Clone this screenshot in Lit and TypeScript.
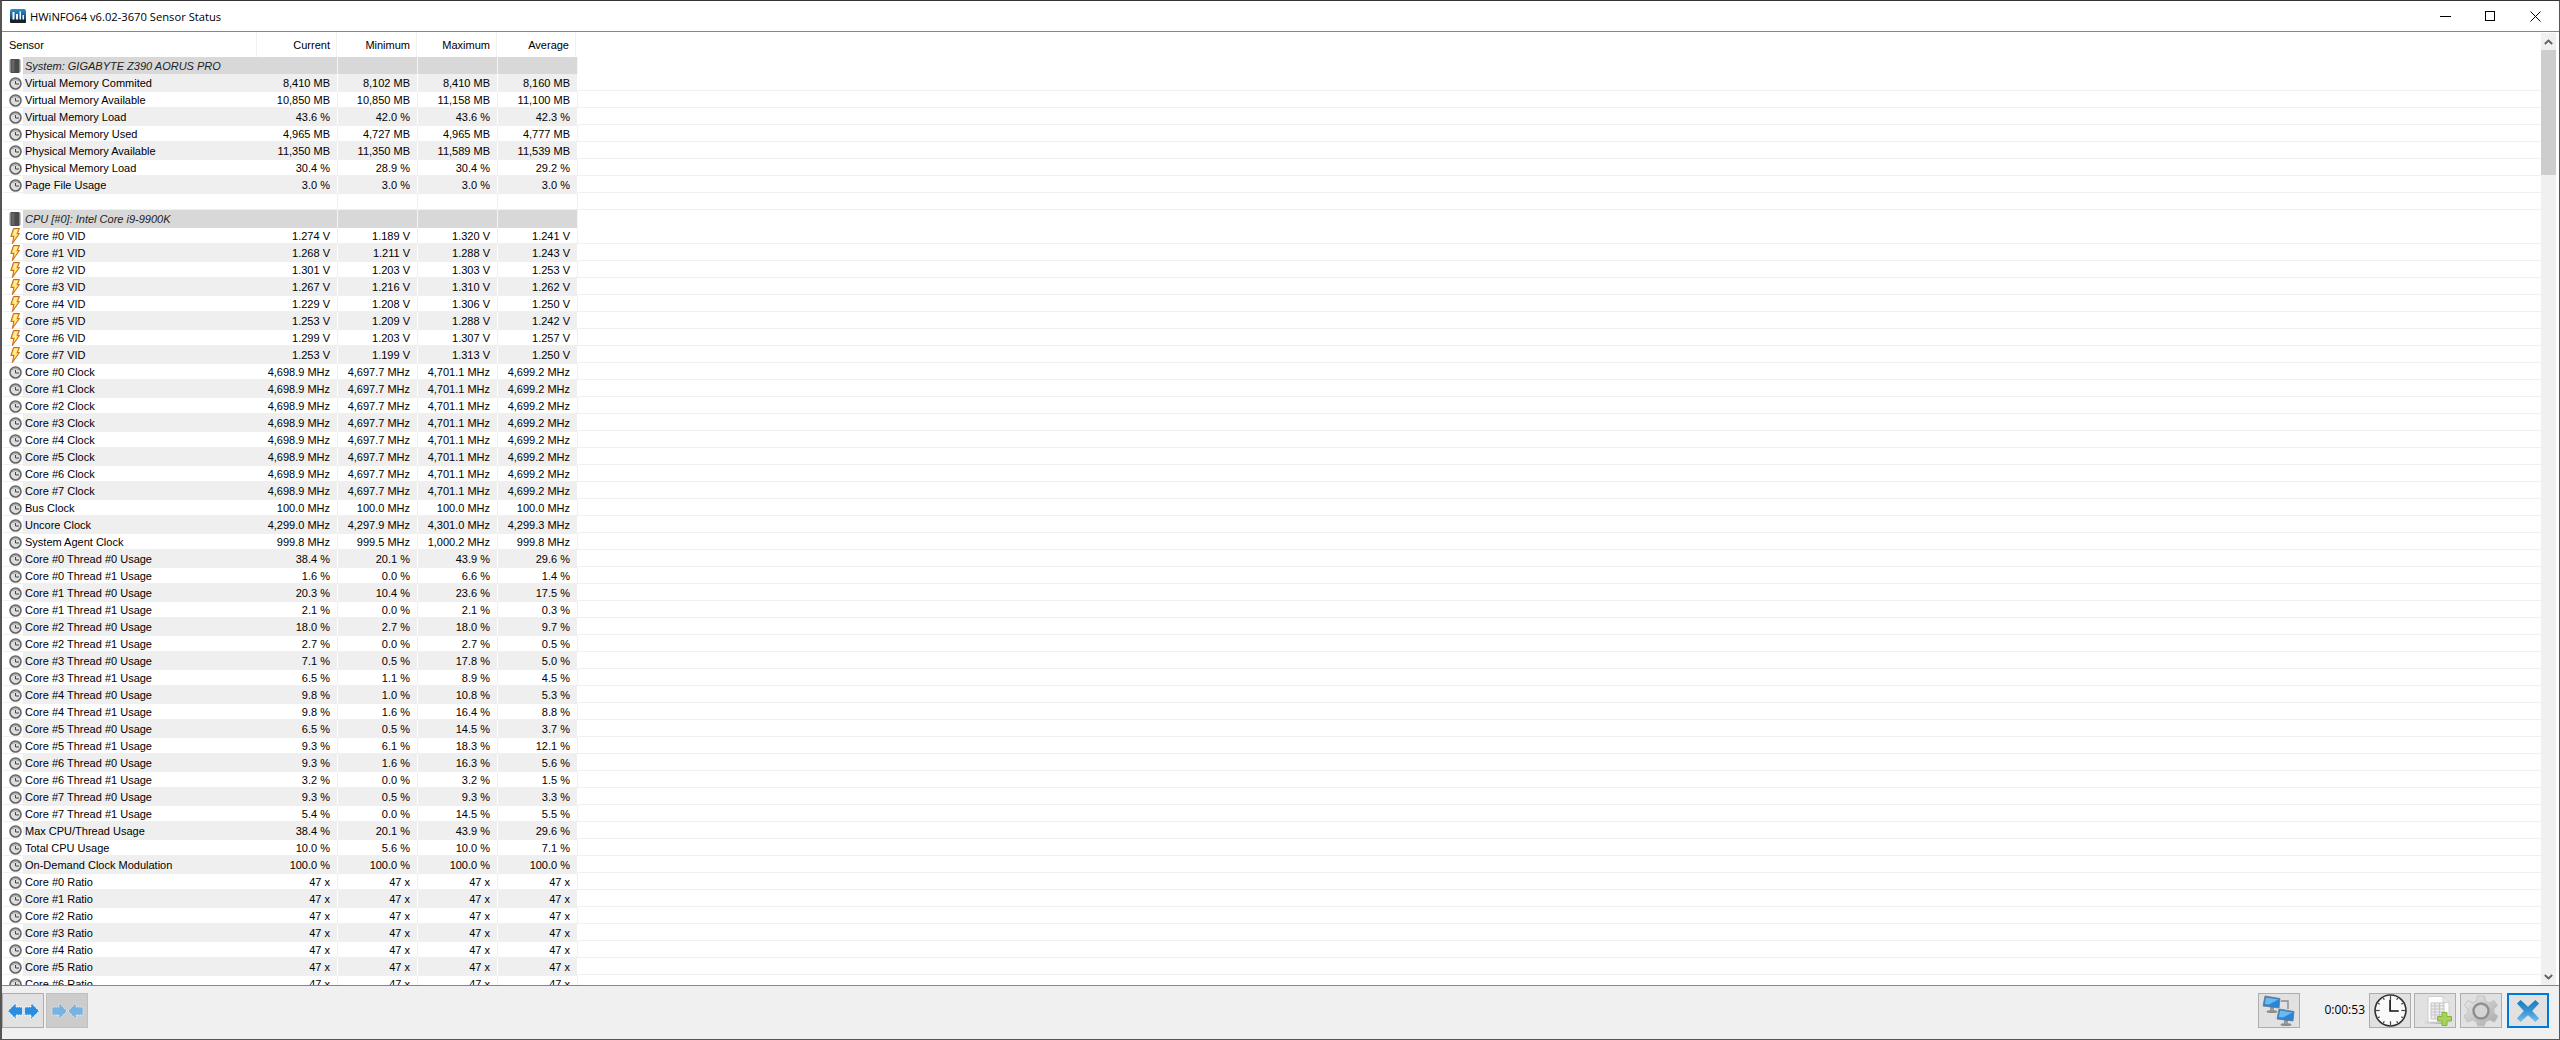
import { LitElement, html, css, svg } from 'lit';
import { customElement } from 'lit/decorators.js';

type Kind = 'clock' | 'volt' | 'chip' | 'none';
interface Row { name: string; vals: string[]; kind: Kind; group?: boolean }

const item = (name: string, kind: Kind, vals: string[], unit: string): Row => ({
  name,
  kind,
  vals: vals.map((v) => `${v} ${unit}`),
});

const rows: Row[] = [
  { name: 'System: GIGABYTE Z390 AORUS PRO', kind: 'chip', vals: [], group: true },
  item('Virtual Memory Commited', 'clock', ['8,410', '8,102', '8,410', '8,160'], 'MB'),
  item('Virtual Memory Available', 'clock', ['10,850', '10,850', '11,158', '11,100'], 'MB'),
  item('Virtual Memory Load', 'clock', ['43.6', '42.0', '43.6', '42.3'], '%'),
  item('Physical Memory Used', 'clock', ['4,965', '4,727', '4,965', '4,777'], 'MB'),
  item('Physical Memory Available', 'clock', ['11,350', '11,350', '11,589', '11,539'], 'MB'),
  item('Physical Memory Load', 'clock', ['30.4', '28.9', '30.4', '29.2'], '%'),
  item('Page File Usage', 'clock', ['3.0', '3.0', '3.0', '3.0'], '%'),
  { name: '', kind: 'none', vals: [] },
  { name: 'CPU [#0]: Intel Core i9-9900K', kind: 'chip', vals: [], group: true },
];

const vids = [
  ['1.274', '1.189', '1.320', '1.241'],
  ['1.268', '1.211', '1.288', '1.243'],
  ['1.301', '1.203', '1.303', '1.253'],
  ['1.267', '1.216', '1.310', '1.262'],
  ['1.229', '1.208', '1.306', '1.250'],
  ['1.253', '1.209', '1.288', '1.242'],
  ['1.299', '1.203', '1.307', '1.257'],
  ['1.253', '1.199', '1.313', '1.250'],
];
vids.forEach((v, i) => rows.push(item(`Core #${i} VID`, 'volt', v, 'V')));

for (let i = 0; i < 8; i++) {
  rows.push(item(`Core #${i} Clock`, 'clock', ['4,698.9', '4,697.7', '4,701.1', '4,699.2'], 'MHz'));
}
rows.push(item('Bus Clock', 'clock', ['100.0', '100.0', '100.0', '100.0'], 'MHz'));
rows.push(item('Uncore Clock', 'clock', ['4,299.0', '4,297.9', '4,301.0', '4,299.3'], 'MHz'));
rows.push(item('System Agent Clock', 'clock', ['999.8', '999.5', '1,000.2', '999.8'], 'MHz'));

const usage = [
  ['38.4', '20.1', '43.9', '29.6'],
  ['1.6', '0.0', '6.6', '1.4'],
  ['20.3', '10.4', '23.6', '17.5'],
  ['2.1', '0.0', '2.1', '0.3'],
  ['18.0', '2.7', '18.0', '9.7'],
  ['2.7', '0.0', '2.7', '0.5'],
  ['7.1', '0.5', '17.8', '5.0'],
  ['6.5', '1.1', '8.9', '4.5'],
  ['9.8', '1.0', '10.8', '5.3'],
  ['9.8', '1.6', '16.4', '8.8'],
  ['6.5', '0.5', '14.5', '3.7'],
  ['9.3', '6.1', '18.3', '12.1'],
  ['9.3', '1.6', '16.3', '5.6'],
  ['3.2', '0.0', '3.2', '1.5'],
  ['9.3', '0.5', '9.3', '3.3'],
  ['5.4', '0.0', '14.5', '5.5'],
];
usage.forEach((v, i) => {
  rows.push(item(`Core #${i >> 1} Thread #${i & 1} Usage`, 'clock', v, '%'));
});
rows.push(item('Max CPU/Thread Usage', 'clock', ['38.4', '20.1', '43.9', '29.6'], '%'));
rows.push(item('Total CPU Usage', 'clock', ['10.0', '5.6', '10.0', '7.1'], '%'));
rows.push(item('On-Demand Clock Modulation', 'clock', ['100.0', '100.0', '100.0', '100.0'], '%'));
for (let i = 0; i < 7; i++) {
  rows.push(item(`Core #${i} Ratio`, 'clock', ['47', '47', '47', '47'], 'x'));
}

const clockIcon = html`<svg width="13" height="13" viewBox="0 0 13 13">
  <circle cx="6.5" cy="6.5" r="5.5" fill="#dedede" stroke="#666" stroke-width="1.6" />
  <path d="M2.2 4.4A5 5 0 0 1 10.8 4.4L6.5 3Z" fill="#9c9c9c" />
  <path d="M6.5 4V7H10" fill="none" stroke="#444" stroke-width="1" />
</svg>`;

const voltIcon = html`<svg width="10" height="16" viewBox="0 0 10 16">
  <path d="M3.5 .5H9.5L7.4 5.5H9.5L2.4 15.5 3.8 8.5H.8Z" fill="#fbc531" stroke="#c8641e" stroke-width="1" stroke-linejoin="round" />
  <path d="M4.4 1.6H7.8L5.8 6.6H7.6L4 11.5 5 7.5H2.6Z" fill="#fff0a0" />
</svg>`;

const chipIcon = html`<svg width="12" height="14" viewBox="0 0 12 14">
  <path d="M0 2H12M0 4H12M0 6H12M0 8H12M0 10H12M0 12H12" stroke="#8a8a8a" stroke-width="1" />
  <rect x="1.5" y="0" width="9" height="14" fill="#4b4b4b" />
  <rect x="2.5" y="1" width="3" height="12" fill="#666" />
</svg>`;

const icons = { clock: clockIcon, volt: voltIcon, chip: chipIcon, none: null };

const appIcon = html`<svg width="16" height="14" viewBox="0 0 16 14">
  <defs>
    <linearGradient id="appBg" x1="0" y1="0" x2="0" y2="1">
      <stop offset="0" stop-color="#2f8fd0" />
      <stop offset=".6" stop-color="#14507f" />
      <stop offset="1" stop-color="#16202a" />
    </linearGradient>
  </defs>
  <rect width="16" height="14" rx="2" fill="url(#appBg)" />
  <rect x="0" y="10.5" width="16" height="3.5" rx="1" fill="#1a2026" />
  <path d="M2.5 3H4.5V10.5H2.5ZM6 5H8V10.5H6ZM9.5 2.5H11V10.5H9.5ZM12.5 6H14V10.5H12.5Z" fill="#f2f7fb" />
</svg>`;

const outArrows = (fill: string) => html`<svg width="33" height="18" viewBox="0 0 33 18">
  <path d="M.8 9 9 .8V5H15.5V13H9V17.2ZM32.2 9 24 .8V5H17.5V13H24V17.2Z" fill="${fill}" stroke="#fff" stroke-width="1" stroke-dasharray="1.5 1" />
</svg>`;

const inArrows = (fill: string) => html`<svg width="33" height="18" viewBox="0 0 33 18">
  <path d="M16 9 8 .8V5H1V13H8V17.2ZM17 9 25 .8V5H32V13H25V17.2Z" fill="${fill}" stroke="#e4e8ec" stroke-width="1" stroke-dasharray="1.5 1" />
</svg>`;

const monitor = (x: number, y: number) => svg`<g transform="translate(${x} ${y})">
  <ellipse cx="9" cy="15.5" rx="5.5" ry="1.6" fill="#8d8d8d" />
  <rect x="7" y="11" width="4" height="4" fill="#9a9a9a" />
  <path d="M2 0 17 2.5 16 12 0 10Z" fill="#2a85d8" stroke="#6c7680" stroke-width=".8" />
  <path d="M3 1.5 15.5 3.5 6 8.5 1.8 8Z" fill="#7cc6f2" opacity=".8" />
</g>`;

const networkIcon = html`<svg width="34" height="32" viewBox="0 0 34 32">
  <path d="M19 6H26V14" fill="none" stroke="#8c8c8c" stroke-width="1.4" />
  ${monitor(1, 1)}
  ${monitor(15, 14)}
</svg>`;

const ticks = Array.from({ length: 12 }, (_, i) => {
  const a = (i * Math.PI) / 6;
  const r1 = i % 3 === 0 ? 10.5 : 12;
  return svg`<line x1="${16 + Math.sin(a) * r1}" y1="${16 - Math.cos(a) * r1}" x2="${16 + Math.sin(a) * 14}" y2="${16 - Math.cos(a) * 14}" stroke="#444" stroke-width="1.2" />`;
});

const clockFace = html`<svg width="33" height="33" viewBox="0 0 32 32">
  <circle cx="16" cy="16" r="15" fill="#fafafa" stroke="#333" stroke-width="1.6" />
  ${ticks}
  <path d="M15.6 5.5V16.5H24" fill="none" stroke="#111" stroke-width="1.6" />
</svg>`;

const docIcon = html`<svg width="34" height="32" viewBox="0 0 34 32">
  <defs>
    <linearGradient id="docShadow" x1="0" y1="0" x2="1" y2="0">
      <stop offset="0" stop-color="#e8e8e8" />
      <stop offset="1" stop-color="#a8a8a8" />
    </linearGradient>
  </defs>
  <rect x="3" y="26" width="24" height="3" fill="url(#docShadow)" />
  <path d="M10 1.5H25L31 7.5V27H10Z" fill="#fdfdfd" stroke="#cfcfcf" stroke-width="1" />
  <path d="M25 1.5V7.5H31" fill="#e8e8e8" stroke="#cfcfcf" stroke-width="1" />
  <path d="M13 8H26V24H13ZM13 11H26M13 14H26M13 17H26M13 20H26M17 8V24M21.5 8V24" fill="#ececec" stroke="#c4c4c4" stroke-width="1" />
  <path d="M24 17.5H29V21.5H33.5V26H29V30.5H24V26H19.5V21.5H24Z" fill="#a6d35c" stroke="#86b23c" stroke-width="1" />
</svg>`;

const gearIcon = html`<svg width="36" height="32" viewBox="0 0 36 32">
  <defs>
    <linearGradient id="gearFill" x1="0" y1="0" x2="1" y2="1">
      <stop offset="0" stop-color="#ececec" />
      <stop offset="1" stop-color="#a6a6a6" />
    </linearGradient>
  </defs>
  <path d="M14.5 1H21.5L22.5 6 26.5 7.8 31 5.5 34.5 10.5 31 14 31 18 35 21 31.5 27 26.5 25 22.5 27 21.5 31H14.5L13.5 27 9.5 25 4.5 27 1 21 5 18 5 14 1.5 10.5 5 5.5 9.5 7.8 13.5 6Z" fill="url(#gearFill)" stroke="#c2c2c2" stroke-width="1" />
  <circle cx="18" cy="16" r="7.5" fill="#d4d4d4" stroke="#8f8f8f" stroke-width="2.4" />
</svg>`;

const closeIcon = html`<svg width="24" height="24" viewBox="0 0 26 26">
  <defs>
    <linearGradient id="xFill" x1="0" y1="0" x2="0" y2="1">
      <stop offset="0" stop-color="#1e7cc0" />
      <stop offset=".55" stop-color="#3a97d6" />
      <stop offset="1" stop-color="#74c3ec" />
    </linearGradient>
  </defs>
  <path d="M1 5 5 1 13 8.5 21 1 25 5 17.5 13 25 21 21 25 13 17.5 5 25 1 21 8.5 13Z" fill="url(#xFill)" stroke-linejoin="round" />
</svg>`;

@customElement('app-root')
export class AppRoot extends LitElement {
  static styles = css`
    :host {
      display: flex;
      flex-direction: column;
      width: 2560px;
      height: 1040px;
      overflow: hidden;
      box-sizing: border-box;
      background: #fff;
      border: 1px solid #555;
      border-top-color: #333;
      border-left-width: 2px;
      font-family: 'Liberation Sans', sans-serif;
      font-size: 11px;
      color: #000;
    }
    .titlebar {
      flex: none;
      height: 30px;
      display: flex;
      align-items: center;
      padding-left: 8px;
      gap: 4px;
      border-bottom: 1px solid #85858b;
      font-family: 'Open Sans', sans-serif;
      font-size: 11.2px;
    }
    .title { flex: 1; }
    .win-btns { display: flex; margin-right: 1px; }
    .win-btn {
      width: 45px;
      height: 30px;
      display: flex;
      align-items: center;
      justify-content: center;
    }
    .main {
      flex: 1;
      min-height: 0;
      display: flex;
      padding-left: 1px;
    }
    .list {
      flex: 1;
      min-width: 0;
      overflow: hidden;
    }
    .row {
      display: grid;
      grid-template-columns: 20px 235px 80px 80px 80px 80px 1fr;
      height: 17px;
      box-sizing: border-box;
      border-bottom: 1px solid #f0f0f0;
      line-height: 18px;
    }
    .head {
      grid-template-columns: 254px 80px 80px 80px 79px 1fr;
      height: 25px;
      border-bottom: none;
      line-height: 27px;
    }
    .icon {
      display: flex;
      align-items: center;
      justify-content: center;
      box-sizing: border-box;
      padding: 1px 0 0 4px;
      height: 17px;
      overflow: hidden;
    }
    .name {
      padding-left: 2px;
      white-space: nowrap;
    }
    .sensor-head {
      padding-left: 6px;
      border-right: 1px solid #f0f0f0;
    }
    .val {
      text-align: right;
      padding-right: 7px;
      border-right: 1px solid #f0f0f0;
      white-space: nowrap;
    }
    .head .val { padding-right: 6px; }
    .alt .name, .alt .val { background: #efefef; }
    .alt .val { border-right-color: #fff; }
    .group { border-bottom-color: #fff; }
    .group .name, .group .val { background: #d8d8d8; }
    .group .val { border-right-color: #f4f4f4; }
    .group .name { font-style: italic; color: #222; }
    .scrollbar {
      flex: none;
      width: 15px;
      margin: 1px 3px 0 0;
      background: #f0f0f0;
      display: flex;
      flex-direction: column;
    }
    .arrow {
      flex: none;
      height: 17px;
      display: flex;
      align-items: center;
      justify-content: center;
    }
    .thumb { flex: none; height: 125px; background: #cdcdcd; }
    .track { flex: 1; }
    .footer {
      flex: none;
      height: 54px;
      box-sizing: border-box;
      border-top: 1px solid #85858b;
      background: #f0f0f0;
      display: flex;
      align-items: flex-start;
      padding: 7px 10px 0 0;
    }
    .btn {
      box-sizing: border-box;
      width: 42px;
      height: 35px;
      background: #e1e1e1;
      border: 1px solid #adadad;
      display: flex;
      align-items: center;
      justify-content: center;
    }
    .nav { margin-right: 2px; }
    .nav.off { background: #cccccc; border-color: #bfbfbf; }
    .spacer { flex: 1; }
    .timer {
      width: 69px;
      height: 35px;
      line-height: 33px;
      text-align: right;
      padding-right: 4px;
      box-sizing: border-box;
      font-family: 'Open Sans', sans-serif;
      font-size: 12px;
    }
    .gap { margin-left: 3px; }
    .gap2 { margin-left: 4px; }
    .quit { margin-left: 5px; border: 2px solid #0078d7; }
  `;

  private renderRow(row: Row, index: number) {
    const cls = row.group ? 'row group' : index % 2 === 1 ? 'row alt' : 'row';
    const cells = row.vals.length ? row.vals : ['', '', '', ''];
    return html`<div class="${cls}">
      <div class="icon">${icons[row.kind]}</div>
      <div class="name">${row.name}</div>
      ${cells.map((v) => html`<div class="val">${v}</div>`)}
    </div>`;
  }

  render() {
    return html`
      <div class="titlebar">
        ${appIcon}
        <div class="title">HWiNFO64 v6.02-3670 Sensor Status</div>
        <div class="win-btns">
          <div class="win-btn">
            <svg width="11" height="11" viewBox="0 0 11 11"><path d="M0 5.5H11" stroke="#000" /></svg>
          </div>
          <div class="win-btn">
            <svg width="11" height="11" viewBox="0 0 11 11"><rect x=".5" y=".5" width="9" height="9" fill="none" stroke="#000" /></svg>
          </div>
          <div class="win-btn">
            <svg width="11" height="11" viewBox="0 0 11 11"><path d="M.5 .5 10.5 10.5M10.5 .5 .5 10.5" stroke="#000" /></svg>
          </div>
        </div>
      </div>
      <div class="main">
        <div class="list">
          <div class="row head">
            <div class="sensor-head">Sensor</div>
            <div class="val">Current</div>
            <div class="val">Minimum</div>
            <div class="val">Maximum</div>
            <div class="val">Average</div>
          </div>
          ${rows.map((r, i) => this.renderRow(r, i))}
        </div>
        <div class="scrollbar">
          <div class="arrow">
            <svg width="9" height="6" viewBox="0 0 9 6"><path d="M.8 5 4.5 1.5 8.2 5" fill="none" stroke="#606060" stroke-width="1.8" /></svg>
          </div>
          <div class="thumb"></div>
          <div class="track"></div>
          <div class="arrow">
            <svg width="9" height="6" viewBox="0 0 9 6"><path d="M.8 1 4.5 4.5 8.2 1" fill="none" stroke="#606060" stroke-width="1.8" /></svg>
          </div>
        </div>
      </div>
      <div class="footer">
        <div class="btn nav">${outArrows('#2a8de0')}</div>
        <div class="btn nav off">${inArrows('#78b2e0')}</div>
        <div class="spacer"></div>
        <div class="btn">${networkIcon}</div>
        <div class="timer">0:00:53</div>
        <div class="btn">${clockFace}</div>
        <div class="btn gap">${docIcon}</div>
        <div class="btn gap2">${gearIcon}</div>
        <div class="btn quit">${closeIcon}</div>
      </div>
    `;
  }
}
